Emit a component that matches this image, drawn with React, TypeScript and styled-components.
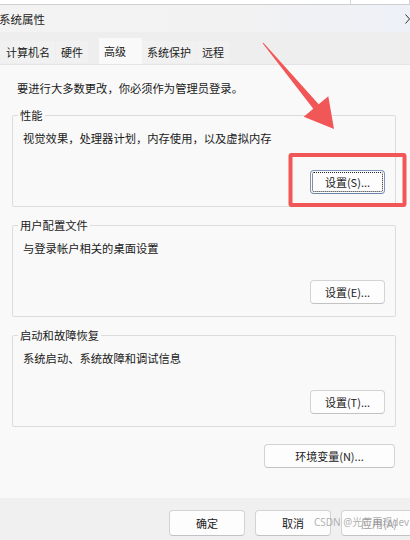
import React from "react";
import styled, { createGlobalStyle } from "styled-components";

const GlobalStyle = createGlobalStyle`
  html, body { margin: 0; padding: 0; background: #f0f0f0; }
  body {
    font-family: "Noto Sans CJK SC", "Noto Sans", "Liberation Sans", sans-serif;
    color: #1a1a1a;
    -webkit-font-smoothing: antialiased;
  }
`;

const Window = styled.div`
  position: relative;
  width: 410px;
  height: 540px;
  overflow: hidden;
  display: flex;
  flex-direction: column;
  background: #f0f0f0;
`;

const TopStrip = styled.div`
  height: 4px;
  display: flex;
  background: #ffffff;
  border-bottom: 1px solid #cfcfcf;
`;

const StripCell = styled.div<{ $w?: number }>`
  width: ${(p) => (p.$w ? `${p.$w}px` : "auto")};
  flex: ${(p) => (p.$w ? "none" : "1")};
  border-right: 1px solid #d4d4d4;
`;

const TitleBar = styled.div`
  height: 27px;
  display: flex;
  align-items: center;
  justify-content: space-between;
  background: linear-gradient(90deg, #f3f3f3 0%, #f2f2f3 60%, #edf0f7 100%);
`;

const Title = styled.span`
  font-size: 11.5px;
  margin-left: -1px;
  color: #1b1b1b;
`;

const TabRow = styled.div`
  height: 32px;
  display: flex;
  align-items: flex-end;
  background: #eeeeee;
`;

const Tab = styled.div<{ $active?: boolean; $pl?: number; $pr?: number; $ml?: number }>`
  height: ${(p) => (p.$active ? "26px" : "22px")};
  display: flex;
  align-items: ${(p) => (p.$active ? "flex-start" : "center")};
  padding: ${(p) => (p.$active ? "5px" : "0")} ${(p) => p.$pr ?? 5}px 0 ${(p) => p.$pl ?? 5}px;
  margin-left: ${(p) => p.$ml ?? 0}px;
  margin-bottom: ${(p) => (p.$active ? "0" : "1px")};
  box-sizing: border-box;
  font-size: 11px;
  color: #1b1b1b;
  background: ${(p) => (p.$active ? "#f9f9f9" : "#f1f1f1")};
`;

const Panel = styled.div`
  height: 434px;
  background: #f9f9f9;
  border-top: 1px solid #e4e4e4;
  padding: 15px 14px 0 12px;
  box-sizing: border-box;
  display: flex;
  flex-direction: column;
`;

const Intro = styled.div`
  font-size: 11.3px;
  line-height: 16px;
  padding-left: 5px;
  margin-bottom: 12px;
`;

const Group = styled.fieldset`
  margin: 0 0 11px 0;
  border: 1px solid #dcdcdc;
  border-radius: 2px;
  padding: 8px 10px 12px 10px;
  display: flex;
  flex-direction: column;
  min-width: 0;
`;

const Legend = styled.legend`
  font-size: 11.3px;
  line-height: 14px;
  padding: 0 2px;
  margin-left: -5px;
  color: #1b1b1b;
`;

const Desc = styled.div`
  font-size: 11.3px;
  line-height: 16px;
  margin-bottom: 24px;
`;

const Button = styled.button<{ $w: number; $focus?: boolean; $disabled?: boolean }>`
  width: ${(p) => p.$w}px;
  height: 24px;
  box-sizing: border-box;
  font-family: inherit;
  font-size: 11px;
  color: ${(p) => (p.$disabled ? "#a0a0a0" : "#1b1b1b")};
  background: #fdfdfd;
  border: 1px solid ${(p) => (p.$focus ? "#7d93b8" : "#d3d3d3")};
  border-bottom-color: ${(p) => (p.$focus ? "#6d84ab" : "#c2c2c2")};
  border-radius: 4px;
  outline: ${(p) => (p.$focus ? "1px dotted #222" : "none")};
  outline-offset: -3px;
  padding: 0;
  display: flex;
  align-items: center;
  justify-content: center;
  align-self: flex-end;
`;

const EnvButton = styled(Button)`
  margin-top: 6px;
  margin-right: 1px;
`;

const Footer = styled.div`
  flex: 1;
  display: flex;
  justify-content: flex-end;
  align-items: flex-start;
  gap: 10px;
  padding-top: 12px;
  margin-right: -7px;
  background: #f0f0f0;
`;

const FooterButton = styled(Button)`
  height: 26px;
  align-self: flex-start;
`;

const Overlay = styled.svg`
  position: absolute;
  left: 0;
  top: 0;
  pointer-events: none;
`;

const Watermark = styled.div`
  position: absolute;
  left: 314px;
  top: 514px;
  font-size: 10px;
  line-height: 16px;
  color: rgba(150, 150, 150, 0.75);
  font-family: "Noto Sans", "Noto Sans CJK SC", sans-serif;
  white-space: nowrap;
`;

const groups = [
  { title: "性能", desc: "视觉效果，处理器计划，内存使用，以及虚拟内存", btn: "设置(S)...", focus: true },
  { title: "用户配置文件", desc: "与登录帐户相关的桌面设置", btn: "设置(E)...", focus: false },
  { title: "启动和故障恢复", desc: "系统启动、系统故障和调试信息", btn: "设置(T)...", focus: false },
];

export default function App() {
  return (
    <>
      <GlobalStyle />
      <Window>
        <TopStrip>
          <StripCell $w={350} />
          <StripCell />
        </TopStrip>
        <TitleBar>
          <Title>系统属性</Title>
          <svg width="5" height="10" viewBox="0 0 5 10">
            <path d="M0.5 0.5 L4.5 5 L0.5 9.5" stroke="#333" strokeWidth="1" fill="none" />
          </svg>
        </TitleBar>
        <TabRow>
          <Tab $pl={6} $ml={0}>计算机名</Tab>
          <Tab $ml={1}>硬件</Tab>
          <Tab $active $ml={11} $pr={16}>高级</Tab>
          <Tab $ml={0}>系统保护</Tab>
          <Tab $ml={1}>远程</Tab>
        </TabRow>
        <Panel>
          <Intro>要进行大多数更改，你必须作为管理员登录。</Intro>
          {groups.map((g) => (
            <Group key={g.title}>
              <Legend>{g.title}</Legend>
              <Desc>{g.desc}</Desc>
              <Button $w={75} $focus={g.focus}>{g.btn}</Button>
            </Group>
          ))}
          <EnvButton $w={131}>环境变量(N)...</EnvButton>
        </Panel>
        <Footer>
          <FooterButton $w={76}>确定</FooterButton>
          <FooterButton $w={76}>取消</FooterButton>
          <FooterButton $w={76} $disabled>应用(A)</FooterButton>
        </Footer>
        <Overlay width="410" height="540" viewBox="0 0 410 540">
          <polygon
            points="262.6,43.3 313.3,108.7 303.7,116.8 334,129 328.3,96.2 318.7,104.3 263.4,42.7"
            fill="#f25757"
          />
          <rect x="290.5" y="155" width="114" height="50" fill="none" stroke="#f25757" strokeWidth="4" rx="1" />
        </Overlay>
        <Watermark>CSDN @光芒再现dev</Watermark>
      </Window>
    </>
  );
}
